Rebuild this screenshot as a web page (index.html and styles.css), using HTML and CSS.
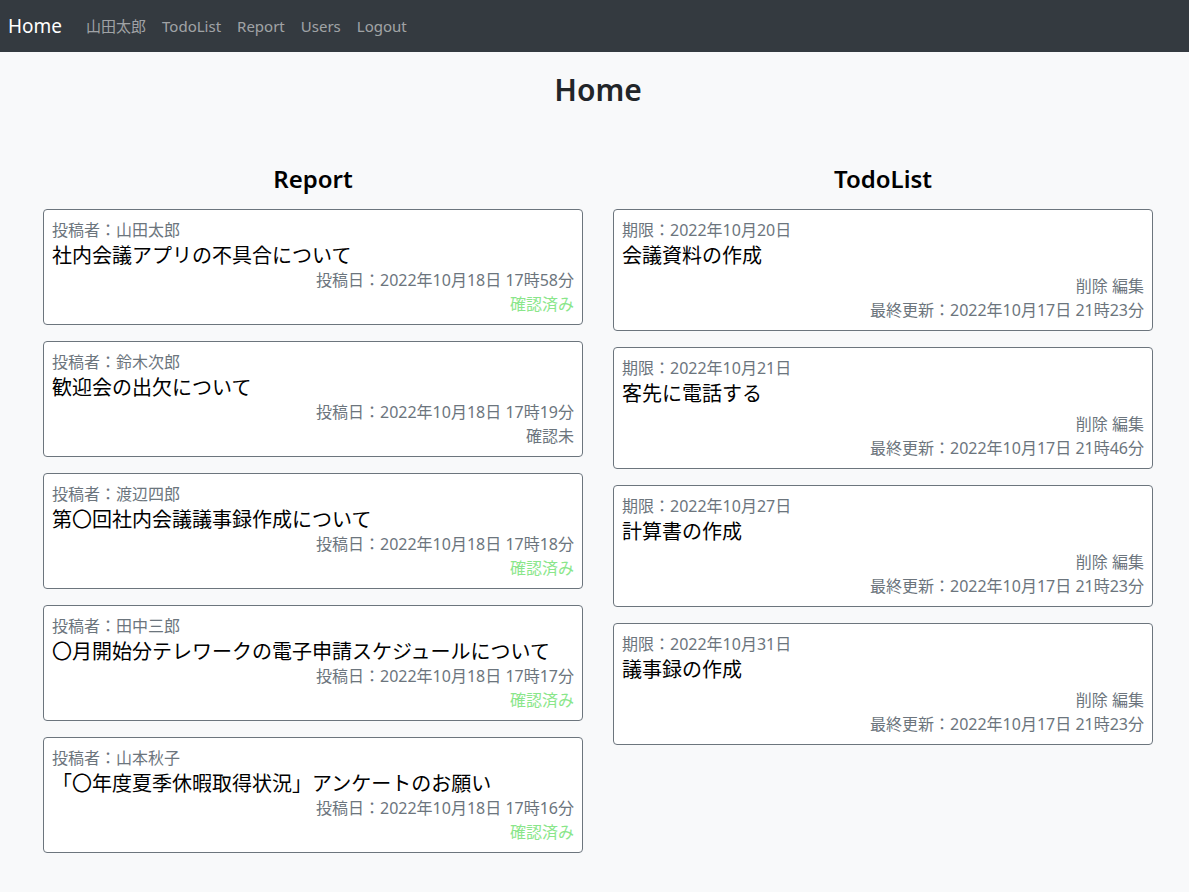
FILE: index.html
```html
<!DOCTYPE html>
<html lang="ja">
<head>
<meta charset="utf-8">
<title>Home</title>
<link rel="stylesheet" href="styles.css">
</head>
<body>
<nav class="navbar">
  <a class="brand" href="#">Home</a>
  <a class="nav-link" href="#">山田太郎</a>
  <a class="nav-link" href="#">TodoList</a>
  <a class="nav-link" href="#">Report</a>
  <a class="nav-link" href="#">Users</a>
  <a class="nav-link" href="#">Logout</a>
</nav>
<main class="main">
  <h1 class="page-title">Home</h1>
  <div class="columns">
    <section class="column">
      <h2 class="col-title">Report</h2>
      <div class="card">
        <div class="meta">投稿者：山田太郎</div>
        <div class="title">社内会議アプリの不具合について</div>
        <div class="meta right">投稿日：2022年10月18日 17時58分</div>
        <div class="meta right ok">確認済み</div>
      </div>
      <div class="card">
        <div class="meta">投稿者：鈴木次郎</div>
        <div class="title">歓迎会の出欠について</div>
        <div class="meta right">投稿日：2022年10月18日 17時19分</div>
        <div class="meta right">確認未</div>
      </div>
      <div class="card">
        <div class="meta">投稿者：渡辺四郎</div>
        <div class="title">第〇回社内会議議事録作成について</div>
        <div class="meta right">投稿日：2022年10月18日 17時18分</div>
        <div class="meta right ok">確認済み</div>
      </div>
      <div class="card">
        <div class="meta">投稿者：田中三郎</div>
        <div class="title">〇月開始分テレワークの電子申請スケジュールについて</div>
        <div class="meta right">投稿日：2022年10月18日 17時17分</div>
        <div class="meta right ok">確認済み</div>
      </div>
      <div class="card">
        <div class="meta">投稿者：山本秋子</div>
        <div class="title">「〇年度夏季休暇取得状況」アンケートのお願い</div>
        <div class="meta right">投稿日：2022年10月18日 17時16分</div>
        <div class="meta right ok">確認済み</div>
      </div>
    </section>
    <section class="column">
      <h2 class="col-title">TodoList</h2>
      <div class="card">
        <div class="meta">期限：2022年10月20日</div>
        <div class="title todo-title">会議資料の作成</div>
        <div class="meta right">削除 編集</div>
        <div class="meta right">最終更新：2022年10月17日 21時23分</div>
      </div>
      <div class="card">
        <div class="meta">期限：2022年10月21日</div>
        <div class="title todo-title">客先に電話する</div>
        <div class="meta right">削除 編集</div>
        <div class="meta right">最終更新：2022年10月17日 21時46分</div>
      </div>
      <div class="card">
        <div class="meta">期限：2022年10月27日</div>
        <div class="title todo-title">計算書の作成</div>
        <div class="meta right">削除 編集</div>
        <div class="meta right">最終更新：2022年10月17日 21時23分</div>
      </div>
      <div class="card">
        <div class="meta">期限：2022年10月31日</div>
        <div class="title todo-title">議事録の作成</div>
        <div class="meta right">削除 編集</div>
        <div class="meta right">最終更新：2022年10月17日 21時23分</div>
      </div>
    </section>
  </div>
</main>
</body>
</html>
```
FILE: styles.css
```css
* { box-sizing: border-box; }
html, body { margin: 0; padding: 0; }
body {
  background: #f8f9fa;
  font-family: "Noto Sans", "Noto Sans CJK JP", sans-serif;
  color: #212529;
  font-size: 16px;
  line-height: 24px;
}
a { text-decoration: none; }
.navbar {
  height: 52px;
  background: #343a40;
  display: flex;
  align-items: center;
  padding: 0 8px 1px;
}
.brand {
  color: #fff;
  font-size: 19px;
  margin-right: 16px;
  line-height: 30px;
}
.nav-link {
  color: rgba(255, 255, 255, 0.55);
  font-size: 15px;
  padding: 0 8px;
  line-height: 24px;
}
.main {
  padding: 16px 0 40px 43px;
}
.page-title {
  width: 1110px;
  margin: 0;
  text-align: center;
  font-size: 30px;
  font-weight: 600;
  line-height: 44px;
  color: #212529;
}
.columns {
  display: flex;
  gap: 30px;
  width: 1110px;
  margin-top: 51px;
}
.column {
  width: 540px;
  display: flex;
  flex-direction: column;
  gap: 16px;
}
.col-title {
  margin: 0 0 -2px;
  text-align: center;
  font-size: 24px;
  font-weight: 600;
  line-height: 32px;
  color: #000;
}
.card {
  background: #fff;
  border: 1px solid #6c757d;
  border-radius: 4px;
  padding: 8px;
}
.meta {
  color: #6c757d;
  font-size: 16px;
  line-height: 24px;
}
.right { text-align: right; }
.ok { color: #8ae68a; }
.title {
  color: #000;
  font-size: 20px;
  line-height: 26px;
  font-family: "Noto Sans CJK JP", "Noto Sans", sans-serif;
}
.todo-title { margin-bottom: 6px; }
```
